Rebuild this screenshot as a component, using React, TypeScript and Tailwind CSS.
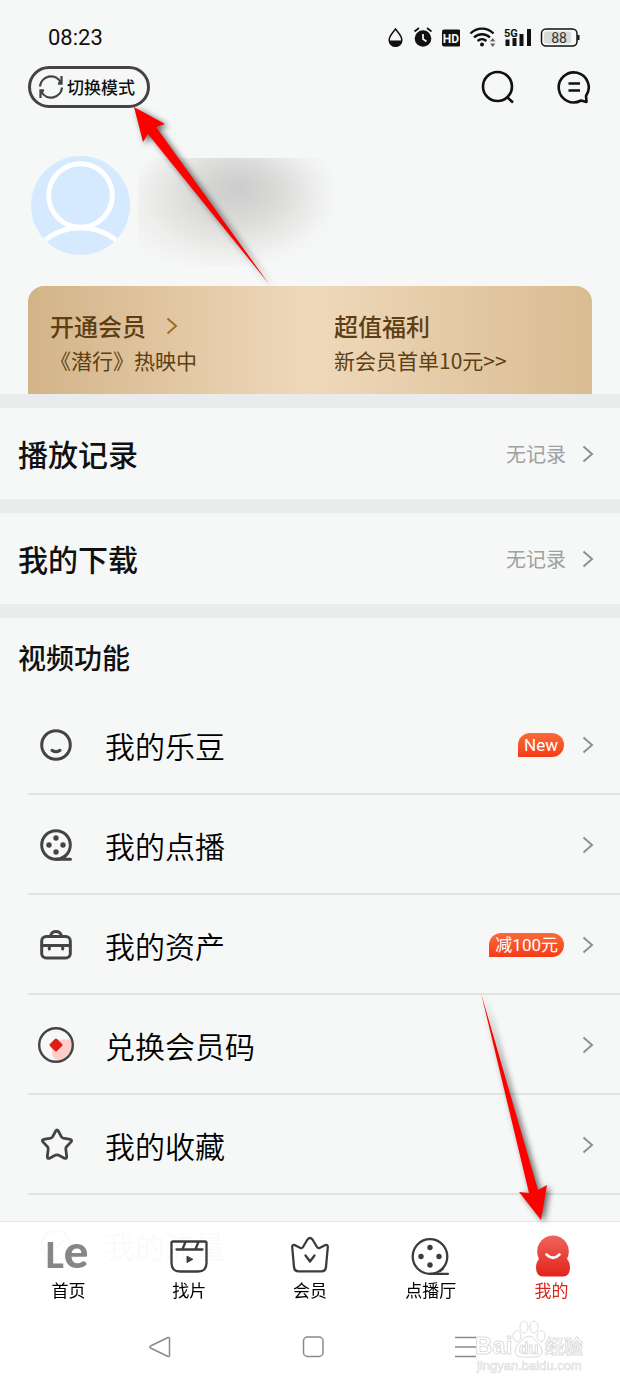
import type { ReactNode } from 'react'

function Chevron({ className = 'text-[#8f8f8f]' }: { className?: string }) {
    return (
        <svg className={`h-5 w-3 shrink-0 ${className}`} viewBox="0 0 12 20" fill="none" stroke="currentColor" strokeWidth="2" aria-hidden="true">
            <path d="M1.500 2.500l8.500 7.500-8.500 7.500" />
        </svg>
    )
}

function StatusIcons() {
    return (
        <div className="flex items-center gap-2 text-[#111]">
            <svg className="h-[22px] w-4" viewBox="0 0 16 22" fill="none">
                <path d="M7.500 3C5.500 6 1.200 9.600 1.200 14a6.300 6.300 0 0 0 12.600 0C13.800 9.600 9.500 6 7.500 3z" stroke="currentColor" strokeWidth="1.500" />
                <path d="M1 14.500h13a6.500 6.300 0 0 1-13 0z" fill="currentColor" />
            </svg>
            <svg className="h-[22px] w-5" viewBox="0 0 20 22" fill="none">
                <circle cx="11" cy="12.500" r="8.300" fill="currentColor" />
                <path d="M2.500 5.500L7 2M19.500 5.500L15 2" stroke="currentColor" strokeWidth="1.800" />
                <path d="M11 8v5l3.500 2.500" stroke="#f6f8f8" strokeWidth="1.700" />
            </svg>
            <svg className="h-[22px] w-5" viewBox="0 0 20 22">
                <rect x="2" y="3.500" width="18.500" height="17" rx="2" fill="currentColor" />
                <text x="11" y="16.500" textAnchor="middle" fontSize="12" fontWeight="700" fontFamily="Roboto, sans-serif" fill="#f6f8f8">HD</text>
            </svg>
            <svg className="h-[22px] w-7" viewBox="0 0 28 22" fill="none" stroke="currentColor" strokeWidth="2.400">
                <path d="M2.500 7.500a16 16 0 0 1 23 0M6 11.500a11.500 11.500 0 0 1 16 0M9.600 15a6.600 6.600 0 0 1 8.800 0" />
                <circle cx="14" cy="18.500" r="2" fill="currentColor" stroke="none" />
                <path d="M22 15.500l2.700-3.500 2.700 3.500zM22 17.500l2.700 3.500 2.700-3.500z" fill="#666" stroke="none" />
            </svg>
            <svg className="h-[22px] w-7" viewBox="0 0 28 22" fill="currentColor">
                <text x="0" y="10.500" fontSize="11" fontWeight="700" fontFamily="Roboto, sans-serif">5G</text>
                <rect x="1.500" y="13.500" width="4" height="6.500" />
                <rect x="8.500" y="12" width="4" height="8" />
                <rect x="15.500" y="8" width="4" height="12" />
                <rect x="23" y="3" width="4" height="17" />
            </svg>
            <svg className="h-[22px] w-10" viewBox="0 0 40 22" fill="none">
                <rect x="1.500" y="3" width="35.500" height="17" rx="4.500" stroke="currentColor" strokeWidth="1.500" />
                <rect x="4" y="5.500" width="27" height="12" rx="2" fill="#d9dada" />
                <path d="M38.500 9v5" stroke="currentColor" strokeWidth="2" />
                <text x="19" y="16.500" textAnchor="middle" fontSize="14" fontFamily="Roboto, sans-serif" fill="#333">88</text>
            </svg>
        </div>
    )
}

function LineIcon({ children }: { children: ReactNode }) {
    return (
        <svg className="h-9 w-9 shrink-0 text-[#444]" viewBox="0 0 36 36" fill="none" stroke="currentColor" strokeWidth="3" strokeLinecap="round" strokeLinejoin="round" aria-hidden="true">
            {children}
        </svg>
    )
}

const star = 'M20.300 4q-1.300-2-2.600 0l-3 5.700q-.6 1.100-1.900 1.400l-7 1.300q-2.300.6-.9 2.500l4.600 4.900q.9 1 .7 2.300l-.9 7.500q0 2.500 2.300 1.600l6.100-3.100q1.300-.5 2.600 0l6.100 3.100q2.300.9 2.300-1.600l-.9-7.500q-.2-1.300.7-2.300l4.600-4.900q1.400-1.900-.9-2.500l-7-1.300q-1.300-.3-1.900-1.400z'

const features: { label: string; tag?: string; icon: ReactNode }[] = [
    {
        label: '我的乐豆',
        tag: 'New',
        icon: (
            <LineIcon>
                <circle cx="18" cy="18" r="14.300" />
                <path d="M14 23.300q4 3 8 0" />
            </LineIcon>
        ),
    },
    {
        label: '我的点播',
        icon: (
            <LineIcon>
                <circle cx="18" cy="18" r="14.300" />
                <path d="M18 32.300h14.500M24 31l3-2" />
                <g fill="currentColor" stroke="none">
                    <circle cx="18" cy="11" r="2.700" />
                    <circle cx="11" cy="18" r="2.700" />
                    <circle cx="25" cy="18" r="2.700" />
                    <circle cx="18" cy="25" r="2.700" />
                </g>
            </LineIcon>
        ),
    },
    {
        label: '我的资产',
        tag: '减100元',
        icon: (
            <LineIcon>
                <rect x="3.700" y="9.500" width="28.600" height="21.500" rx="4.500" />
                <path d="M12.500 9q1-4.500 5.500-4.500T23.500 9M4 18.500h28M11.300 19v3M24.700 19v3" />
            </LineIcon>
        ),
    },
    {
        label: '兑换会员码',
        icon: (
            <LineIcon>
                <path d="M16 12.500h17q3 9-4 15.500-5 6-9 5-6-1-6-9v-9z" fill="#ffcdca" stroke="none" />
                <circle cx="18" cy="18" r="16.800" strokeWidth="2.400" />
                <path d="M18 13l5 5-5 5-5-5z" fill="#dc1f16" stroke="#dc1f16" />
            </LineIcon>
        ),
    },
    {
        label: '我的收藏',
        icon: (
            <LineIcon>
                <path d={star} strokeWidth="2.800" />
            </LineIcon>
        ),
    },
    {
        label: '我的流量',
        icon: (
            <LineIcon>
                <circle cx="18" cy="18" r="14.300" />
                <path d="M13 18l5 4 8-9" />
            </LineIcon>
        ),
    },
]

function TabIcon({ children }: { children: ReactNode }) {
    return (
        <svg className="h-[42px] w-12 overflow-visible" viewBox="0 0 48 42" fill="none" stroke="#3c3c3c" strokeWidth="2.300" strokeLinecap="round" strokeLinejoin="round" aria-hidden="true">
            {children}
        </svg>
    )
}

const tabs: { label: string; active?: boolean; icon: ReactNode }[] = [
    {
        label: '首页',
        icon: (
            <TabIcon>
                <text x="1" y="34" fontFamily="Lato, sans-serif" fontWeight="900" fontSize="36" fill="#868686" stroke="none">
                    L<tspan fontSize="46">e</tspan>
                </text>
            </TabIcon>
        ),
    },
    {
        label: '找片',
        icon: (
            <TabIcon>
                <path d="M8 7.500h32q1.500 0 1.500 1.500v20q0 8.500-8.500 8.500H15q-8.500 0-8.500-8.500V9q0-1.500 1.500-1.500zM11.500 15.500h26M20.500 8l-3 7M33.500 8l-3 7" />
                <path d="M22 22.500v6l5.500-3z" fill="#3c3c3c" stroke="#3c3c3c" strokeWidth="1" />
            </TabIcon>
        ),
    },
    {
        label: '会员',
        icon: (
            <TabIcon>
                <path d="M21.500 5.500q2.500-3 5 0l4.500 7.500q1 1.800 3 .8l5-2.600q3-1 2.800 2L40 33q-.5 4.300-4.500 4.300h-23Q8.500 37.300 8 33L6.200 13.200q-.2-3 2.800-2l5 2.600q2 1 3-.8zM19.500 21.500l4.500 6 4.500-6" />
            </TabIcon>
        ),
    },
    {
        label: '点播厅',
        icon: (
            <TabIcon>
                <circle cx="23" cy="22.500" r="17.300" />
                <path d="M23 39.800h18M33 37l3-2.500" />
                <g fill="#3c3c3c" stroke="none">
                    <circle cx="23" cy="13.500" r="2.700" />
                    <circle cx="14" cy="22.500" r="2.700" />
                    <circle cx="32" cy="22.500" r="2.700" />
                    <circle cx="23" cy="31" r="2.700" />
                </g>
            </TabIcon>
        ),
    },
    {
        label: '我的',
        active: true,
        icon: (
            <TabIcon>
                <defs>
                    <linearGradient id="meFill" x1="0" y1="0" x2="0" y2="1">
                        <stop offset="0" stopColor="#f0645c" />
                        <stop offset="1" stopColor="#e2231a" />
                    </linearGradient>
                </defs>
                <path d="M25 1.500a16 16 0 0 1 14 23.500q3 3 3 8.500 0 9-7 9H15q-7 0-7-9 0-5.500 3-8.500A16 16 0 0 1 25 1.500z" fill="url(#meFill)" stroke="none" />
                <path d="M18.500 20.500q6.500 6.500 13 0" stroke="#fff" strokeWidth="2.600" />
            </TabIcon>
        ),
    },
]

function RecordRow({ title }: { title: string }) {
    return (
        <a href="#" className="flex h-[105px] items-center border-b-[14px] border-[#eaebec] pr-[26px] pl-[18px]">
            <h2 className="flex-1 text-[30px] font-medium">{title}</h2>
            <span className="mr-4 text-xl text-[#a0a0a0]">无记录</span>
            <Chevron />
        </a>
    )
}

function Arrows() {
    return (
        <svg className="pointer-events-none absolute top-0 left-0 z-20 h-[1240px] w-[620px] drop-shadow-[3px_2px_3px_rgba(0,0,0,0.6)]" viewBox="0 0 620 1240" fill="#fe0000" aria-hidden="true">
            <path d="M134 107l31 17-9 3 113 157-121-150-5 8z" />
            <path d="M541 1220l-22-28 10 1-48-200 57 197 9-5z" />
        </svg>
    )
}

function Watermark() {
    return (
        <svg className="pointer-events-none absolute right-8 bottom-2 h-[62px] w-[114px]" viewBox="0 0 114 62" fill="#fff" stroke="#dcdcdc" strokeWidth="1" fontFamily="'Liberation Sans', 'Noto Sans CJK SC', sans-serif" aria-hidden="true">
            <g>
                <ellipse cx="43" cy="20" rx="4" ry="5.500" />
                <ellipse cx="50" cy="11" rx="4" ry="6" />
                <ellipse cx="60" cy="11" rx="4" ry="6" />
                <ellipse cx="67" cy="20" rx="4" ry="5.500" />
                <path d="M55 20q4 0 7 5 6 5 6 10 0 6-7 6H48q-7 0-7-6 0-5 6-10 4-5 8-5z" />
            </g>
            <text x="1" y="38" fontSize="24" fontWeight="700">Bai</text>
            <text x="45" y="38" fontSize="16" fontWeight="700">du</text>
            <text x="71" y="38" fontSize="19" fontWeight="700">经验</text>
            <text x="3" y="54" fontSize="13" strokeWidth="0.700">jingyan.baidu.com</text>
        </svg>
    )
}

export default function App() {
    return (
        <div className="relative min-h-screen overflow-hidden bg-[#f6f8f8] font-['Noto_Sans_CJK_SC',sans-serif] text-[#111]">
            <div className="flex h-[66px] items-center justify-between pt-2 pr-10 pl-12">
                <span className="font-[Roboto,sans-serif] text-[22px]">08:23</span>
                <StatusIcons />
            </div>

            <header className="flex h-[42px] items-center pr-7 pl-7">
                <button className="flex h-[42px] items-center gap-1 rounded-full border-[3px] border-[#444] pr-3 pl-2 text-[17px] font-medium">
                    <svg className="h-6 w-6" viewBox="0 0 24 24" fill="none" stroke="#444" strokeWidth="2.300" aria-hidden="true">
                        <path d="M1 11.500A11 11 0 0 1 21.500 7M22.500 1v7.500h-3.500M23 12.500A11 11 0 0 1 2.500 17M1.500 23v-7.500H5" />
                    </svg>
                    切换模式
                </button>
                <div className="ml-auto flex items-center gap-10">
                    <button aria-label="搜索">
                        <svg className="h-9 w-9" viewBox="0 0 36 36" fill="none" stroke="#111" strokeWidth="2.600">
                            <circle cx="17.500" cy="17.500" r="14.500" />
                            <path d="M27 28l6 5.500" />
                        </svg>
                    </button>
                    <button aria-label="消息">
                        <svg className="h-9 w-9" viewBox="0 0 36 36" fill="none" stroke="#111" strokeWidth="2.600" strokeLinejoin="round">
                            <path d="M25 31.500a15 15 0 1 1 5-4.500l.5 6z" />
                            <path d="M12.500 14.500h11.500M12.500 21.500h11.500" />
                        </svg>
                    </button>
                </div>
            </header>

            <section className="mt-12 flex h-[130px] items-start pl-[30px]">
                <svg className="h-[100px] w-[100px]" viewBox="0 0 100 100" fill="none" aria-hidden="true">
                    <circle cx="50.500" cy="49.500" r="49.500" fill="#d5eaff" />
                    <circle cx="50.500" cy="39.500" r="31.800" stroke="#fff" strokeWidth="5" />
                    <path d="M15 84A58 58 0 0 1 86 84" stroke="#fff" strokeWidth="5" />
                </svg>
                <div className="mt-[2px] ml-2 h-[108px] w-[200px] bg-[radial-gradient(ellipse_100px_68px_at_100px_30px,#cccccc_0%,#cccccc99_35%,#cccccc33_70%,#cccccc00_100%),radial-gradient(ellipse_115px_68px_at_85px_48px,#e3e1dc_0%,#e3e1dc99_50%,#e3e1dc00_100%)]"></div>
            </section>

            <a href="#" className="mx-7 grid h-[108px] grid-cols-2 rounded-t-2xl bg-linear-to-r from-[#d3b488] via-[#efd9bb] to-[#d9bc91] pt-6 text-[#5e3f14]">
                <div className="pl-[22px]">
                    <div className="flex items-center gap-5 text-2xl leading-8 font-medium">
                        开通会员
                        <Chevron className="text-[#a06c1e]" />
                    </div>
                    <p className="mt-0.5 text-[21px] leading-8">《潜行》热映中</p>
                </div>
                <div className="pl-6">
                    <div className="text-2xl leading-8 font-medium">超值福利</div>
                    <p className="mt-0.5 text-[21px] leading-8">新会员首单10元&gt;&gt;</p>
                </div>
            </a>

            <div className="h-[14px] bg-[#eaebec]"></div>
            <RecordRow title="播放记录" />
            <RecordRow title="我的下载" />

            <section>
                <h2 className="flex h-[77px] items-center pl-[18px] text-[28px] font-medium">视频功能</h2>
                <ul className="ml-7">
                    {features.map((f) => (
                        <li key={f.label} className="border-b-2 border-[#e2e4e4]">
                            <a href="#" className="flex h-[98px] items-center pt-0.5 pr-[26px] pl-[10px]">
                                {f.icon}
                                <span className="ml-[31px] flex-1 text-[30px] font-[350] text-black">{f.label}</span>
                                {f.tag && (
                                    <span className="mr-[18px] h-6 rounded-full rounded-bl-none bg-linear-to-b from-[#f96a38] to-[#f63a16] px-[6px] font-[Roboto,'Noto_Sans_CJK_SC',sans-serif] text-[17px] leading-6 text-white">{f.tag}</span>
                                )}
                                <Chevron />
                            </a>
                        </li>
                    ))}
                </ul>
            </section>

            <Arrows />

            <footer className="fixed inset-x-0 bottom-0 z-10 border-t border-[#e6e8e8] bg-white/98">
                <nav className="flex h-[86px] px-2 pt-3">
                    {tabs.map((t) => (
                        <a key={t.label} href="#" className={`flex flex-1 flex-col items-center text-[17px] leading-7 ${t.active ? 'text-[#d8281f]' : 'text-black'}`}>
                            {t.icon}
                            {t.label}
                        </a>
                    ))}
                </nav>
                <div className="relative grid h-[78px] grid-cols-3 place-items-center pr-[76px] pl-21">
                    <button aria-label="返回">
                        <svg className="h-6 w-6" viewBox="0 0 24 24" fill="none" stroke="#8a8a8a" strokeWidth="1.500" strokeLinejoin="round">
                            <path d="M19 2.500q1.500-.5 1.500 1v17q0 1.500-1.500 1L1.500 13q-1.500-1 0-2z" />
                        </svg>
                    </button>
                    <button aria-label="主页">
                        <svg className="h-6 w-6" viewBox="0 0 24 24" fill="none" stroke="#8a8a8a" strokeWidth="1.500">
                            <rect x="1.500" y="2" width="19.500" height="19.500" rx="4" />
                        </svg>
                    </button>
                    <button aria-label="菜单">
                        <svg className="h-6 w-6" viewBox="0 0 24 24" fill="none" stroke="#8a8a8a" strokeWidth="1.700">
                            <path d="M0 2.500h21M0 12h21M0 21.500h21" />
                        </svg>
                    </button>
                    <Watermark />
                </div>
            </footer>
        </div>
    )
}
